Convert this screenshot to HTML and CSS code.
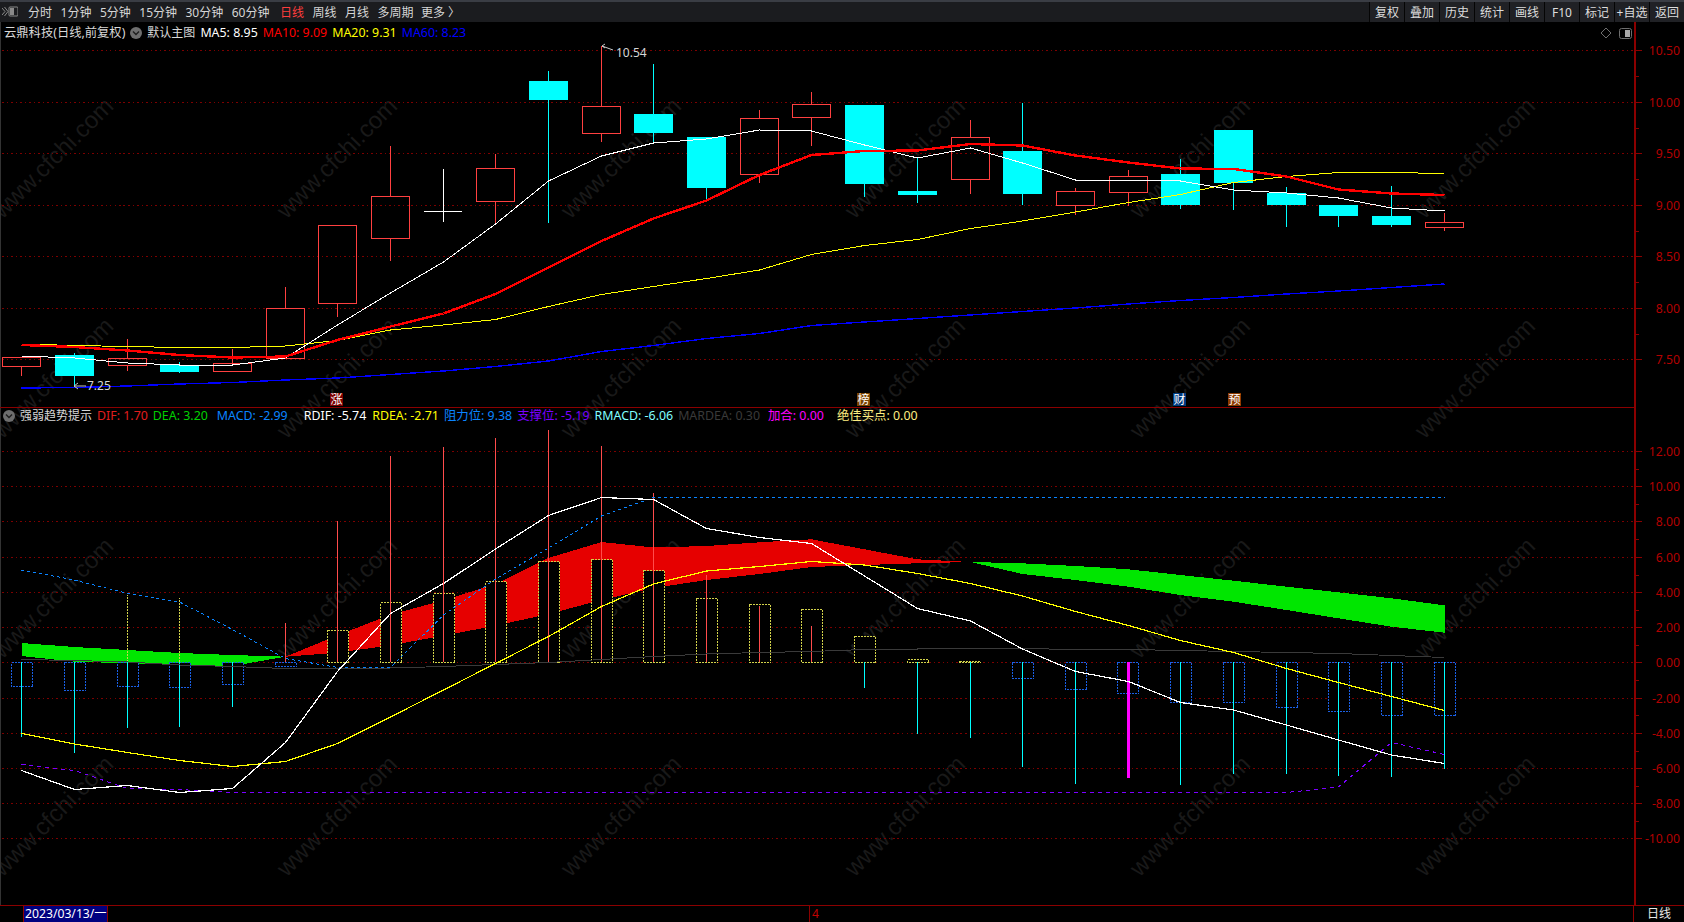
FILE: index.html
```html
<!DOCTYPE html>
<html lang="zh">
<head>
<meta charset="utf-8">
<title>云鼎科技 日线</title>
<link rel="stylesheet" href="styles.css">
</head>
<body>
<div class="app">
  <header class="toolbar">
    <svg class="tool-icon" width="16" height="12" viewBox="0 0 16 12"><path class="ti-line" d="M0 2l3 3.5L0 9M2.5 1l3.5 4.5L2.5 10"/><rect class="ti-box" x="7" y="1" width="9" height="9" rx="1"/><rect class="ti-fill" x="8" y="2" width="4" height="7"/></svg>
    <nav class="periods">
      <span>分时</span><span>1分钟</span><span>5分钟</span><span>15分钟</span><span>30分钟</span><span>60分钟</span><span class="active">日线</span><span>周线</span><span>月线</span><span>多周期</span><span class="more">更多<i>〉</i></span>
    </nav>
    <div class="buttons">
      <button>复权</button><button>叠加</button><button>历史</button><button>统计</button><button>画线</button><button>F10</button><button>标记</button><button>+自选</button><button>返回</button>
    </div>
  </header>

  <main class="charts">
    <svg class="chart" width="1684" height="883" viewBox="0 22 1684 883">
      <g class="wm">
        <text transform="rotate(-45 53 158)" x="53" y="166">www.cfchi.com</text>
        <text transform="rotate(-45 337 158)" x="337" y="166">www.cfchi.com</text>
        <text transform="rotate(-45 621 158)" x="621" y="166">www.cfchi.com</text>
        <text transform="rotate(-45 905 158)" x="905" y="166">www.cfchi.com</text>
        <text transform="rotate(-45 1190 158)" x="1190" y="166">www.cfchi.com</text>
        <text transform="rotate(-45 1475 158)" x="1475" y="166">www.cfchi.com</text>
        <text transform="rotate(-45 53 378)" x="53" y="386">www.cfchi.com</text>
        <text transform="rotate(-45 337 378)" x="337" y="386">www.cfchi.com</text>
        <text transform="rotate(-45 621 378)" x="621" y="386">www.cfchi.com</text>
        <text transform="rotate(-45 905 378)" x="905" y="386">www.cfchi.com</text>
        <text transform="rotate(-45 1190 378)" x="1190" y="386">www.cfchi.com</text>
        <text transform="rotate(-45 1475 378)" x="1475" y="386">www.cfchi.com</text>
        <text transform="rotate(-45 53 598)" x="53" y="606">www.cfchi.com</text>
        <text transform="rotate(-45 337 598)" x="337" y="606">www.cfchi.com</text>
        <text transform="rotate(-45 621 598)" x="621" y="606">www.cfchi.com</text>
        <text transform="rotate(-45 905 598)" x="905" y="606">www.cfchi.com</text>
        <text transform="rotate(-45 1190 598)" x="1190" y="606">www.cfchi.com</text>
        <text transform="rotate(-45 1475 598)" x="1475" y="606">www.cfchi.com</text>
        <text transform="rotate(-45 53 816)" x="53" y="824">www.cfchi.com</text>
        <text transform="rotate(-45 337 816)" x="337" y="824">www.cfchi.com</text>
        <text transform="rotate(-45 621 816)" x="621" y="824">www.cfchi.com</text>
        <text transform="rotate(-45 905 816)" x="905" y="824">www.cfchi.com</text>
        <text transform="rotate(-45 1190 816)" x="1190" y="824">www.cfchi.com</text>
        <text transform="rotate(-45 1475 816)" x="1475" y="824">www.cfchi.com</text>
      </g>

      <path class="grid" d="M2 50.5H1634M2 102.5H1634M2 153.5H1634M2 205.5H1634M2 256.5H1634M2 308.5H1634M2 359.5H1634M2 451.5H1634M2 486.5H1634M2 521.5H1634M2 557.5H1634M2 592.5H1634M2 627.5H1634M2 662.5H1634M2 698.5H1634M2 733.5H1634M2 768.5H1634M2 803.5H1634M2 838.5H1634"/>

      <!-- upper panel: candles -->
      <path class="wick-up" d="M21.5 366V376M127.5 339V358M127.5 365V371M232.5 349V363M285.5 287V308M337.5 303V317M390.5 146V196M390.5 239V261M495.5 154V168M495.5 202V224M601.5 46V106M601.5 134V142M759.5 110V118M759.5 175V183M811.5 92V104M811.5 117V146M970.5 120V137M970.5 180V194M1075.5 188V191M1075.5 206V215M1128.5 170V176M1128.5 193V206M1444.5 213V222M1444.5 228V231"/>
      <g class="body-up">
        <rect x="2.5" y="357.5" width="38" height="9"/>
        <rect x="108.5" y="358.5" width="38" height="7"/>
        <rect x="213.5" y="363.5" width="38" height="8"/>
        <rect x="266.5" y="308.5" width="38" height="50"/>
        <rect x="318.5" y="225.5" width="38" height="78"/>
        <rect x="371.5" y="196.5" width="38" height="42"/>
        <rect x="476.5" y="168.5" width="38" height="33"/>
        <rect x="582.5" y="106.5" width="38" height="27"/>
        <rect x="740.5" y="118.5" width="38" height="56"/>
        <rect x="792.5" y="104.5" width="38" height="13"/>
        <rect x="951.5" y="137.5" width="38" height="42"/>
        <rect x="1056.5" y="191.5" width="38" height="14"/>
        <rect x="1109.5" y="176.5" width="38" height="16"/>
        <rect x="1425.5" y="222.5" width="38" height="5"/>
      </g>
      <path class="wick-down" d="M74.5 353V387.5M179.5 362V373M548.5 71V223M653.5 64V143M706.5 187V199M864.5 184V197M917.5 158V203M1022.5 103V205M1180.5 159V209M1233.5 183V210M1286.5 187V227M1338.5 216V227M1391.5 186V227"/>
      <g class="body-down">
        <rect x="55" y="355" width="39" height="21"/>
        <rect x="160" y="365" width="39" height="7"/>
        <rect x="529" y="81" width="39" height="19"/>
        <rect x="634" y="114" width="39" height="19"/>
        <rect x="687" y="137" width="39" height="51"/>
        <rect x="845" y="105" width="39" height="79"/>
        <rect x="898" y="191" width="39" height="4"/>
        <rect x="1003" y="151" width="39" height="43"/>
        <rect x="1161" y="174" width="39" height="31"/>
        <rect x="1214" y="130" width="39" height="53"/>
        <rect x="1267" y="193" width="39" height="12"/>
        <rect x="1319" y="205" width="39" height="11"/>
        <rect x="1372" y="216" width="39" height="9"/>
      </g>
      <path class="doji" d="M424 211.5H462M443.5 169V222"/>

      <polyline class="l ma60" points="21.5,388 74.5,387.5 127.5,386 179.5,384 232.5,382.5 285.5,380 337.5,378 390.5,374.5 443.5,371 495.5,366.5 548.5,361 601.5,351.5 653.5,345.5 706.5,338.5 759.5,333.5 811.5,325.5 864.5,322 917.5,318.5 970.5,315 1022.5,311.5 1075.5,308 1128.5,304 1180.5,300.5 1233.5,297.5 1286.5,294 1338.5,291 1391.5,287.5 1444.5,284"/>
      <polyline class="l ma20" points="21.5,344 74.5,345.5 127.5,346.5 179.5,347.5 232.5,347.5 285.5,346 337.5,340.5 390.5,330 443.5,325 495.5,319.5 548.5,306.5 601.5,294.5 653.5,286.5 706.5,278.5 759.5,270 811.5,254.5 864.5,245.5 917.5,239.5 970.5,228.5 1022.5,221 1075.5,212 1128.5,202.5 1180.5,194.5 1233.5,182.5 1286.5,176.5 1338.5,172.5 1391.5,172.5 1444.5,173.5"/>
      <polyline class="l ma5" points="21.5,356 74.5,358 127.5,363 179.5,365 232.5,365 285.5,358 337.5,325 390.5,293 443.5,262 495.5,224 548.5,181 601.5,156 653.5,143 706.5,139 759.5,130 811.5,131 864.5,145 917.5,158 970.5,148 1022.5,163 1075.5,180 1128.5,180 1180.5,181 1233.5,190 1286.5,193 1338.5,198 1391.5,208 1444.5,211"/>
      <polyline class="l ma10" points="21.5,345 74.5,347 127.5,350.5 179.5,355 232.5,357.5 285.5,356.5 337.5,340 390.5,326.5 443.5,313.5 495.5,294 548.5,267.5 601.5,241 653.5,218.5 706.5,200.5 759.5,175 811.5,155 864.5,151 917.5,150.5 970.5,144 1022.5,145.5 1075.5,155.5 1128.5,162.5 1180.5,168.5 1233.5,169 1286.5,176.5 1338.5,189.5 1391.5,193.5 1444.5,195"/>

      <path class="note" d="M602 46L613 50M602 46l3-2M602 46l3 2"/>
      <text class="note-t" x="616" y="57">10.54</text>
      <path class="note" d="M74 386H86M74 386l4-3M74 386l4 3"/>
      <text class="note-t" x="87" y="390">7.25</text>

      <g class="flag">
        <rect class="f-red" x="330" y="393" width="13" height="13"/><text x="336.5" y="404">涨</text>
        <rect class="f-brown" x="857" y="393" width="13" height="13"/><text x="863.5" y="404">榜</text>
        <rect class="f-blue" x="1173" y="393" width="13" height="13"/><text x="1179.5" y="404">财</text>
        <rect class="f-orange" x="1228" y="393" width="13" height="13"/><text x="1234.5" y="404">预</text>
      </g>

      <path class="ui-mark" d="M1606 28l5 5-5 5-5-5z"/>
      <rect class="ui-mark" x="1619.5" y="28.5" width="12" height="10" rx="2"/>
      <rect class="ui-fill" x="1625" y="30" width="5" height="7"/>

      <!-- lower panel: ribbons -->
      <polygon class="rb-green" points="21.5,643 74.5,647 127.5,650 179.5,653 232.5,655 285.5,656.7 232.5,666 179.5,665 127.5,663.3 74.5,661.7 21.5,656"/>
      <polygon class="rb-red" points="285.5,656.7 337.5,635.3 390.5,614.7 443.5,600.3 495.5,584 548.5,558 601.5,542 653.5,547.5 706.5,546 759.5,542.3 811.5,539.3 864.5,549.3 917.5,559.3 970.5,562 917.5,563.3 864.5,565 811.5,567 759.5,574 706.5,580 653.5,588 601.5,600 548.5,614 495.5,625.7 443.5,635.7 390.5,645.3 337.5,652.7"/>
      <polygon class="rb-green" points="970.5,562 1022.5,563.3 1075.5,566 1128.5,569.3 1180.5,575 1233.5,580.7 1286.5,586.7 1338.5,592.3 1391.5,598.3 1444.5,605.3 1444.5,632.7 1391.5,626.7 1338.5,618.3 1286.5,610 1233.5,601.7 1180.5,595 1128.5,586.7 1075.5,580 1022.5,574"/>

      <g class="box-blue">
        <rect x="11.5" y="662.5" width="21" height="24"/>
        <rect x="64.5" y="662.5" width="21" height="28"/>
        <rect x="117.5" y="662.5" width="21" height="24"/>
        <rect x="169.5" y="662.5" width="21" height="25"/>
        <rect x="222.5" y="662.5" width="21" height="22"/>
        <rect x="275.5" y="662.5" width="21" height="4"/>
        <rect x="1012.5" y="662.5" width="21" height="16"/>
        <rect x="1065.5" y="662.5" width="21" height="27"/>
        <rect x="1117.5" y="662.5" width="21" height="31"/>
        <rect x="1170.5" y="662.5" width="21" height="40"/>
        <rect x="1223.5" y="662.5" width="21" height="40"/>
        <rect x="1276.5" y="662.5" width="21" height="45"/>
        <rect x="1328.5" y="662.5" width="21" height="49"/>
        <rect x="1381.5" y="662.5" width="21" height="53"/>
        <rect x="1434.5" y="662.5" width="21" height="53"/>
      </g>
      <g class="box-yellow">
        <rect x="327.5" y="630.5" width="21" height="32"/>
        <rect x="380.5" y="602.5" width="21" height="60"/>
        <rect x="433.5" y="593.5" width="21" height="69"/>
        <rect x="485.5" y="581.5" width="21" height="81"/>
        <rect x="538.5" y="561.5" width="21" height="101"/>
        <rect x="591.5" y="559.5" width="21" height="103"/>
        <rect x="643.5" y="570.5" width="21" height="92"/>
        <rect x="696.5" y="598.5" width="21" height="64"/>
        <rect x="749.5" y="604.5" width="21" height="58"/>
        <rect x="801.5" y="609.5" width="21" height="53"/>
        <rect x="854.5" y="636.5" width="21" height="26"/>
        <rect x="907.5" y="659.5" width="21" height="3"/>
        <rect x="959.5" y="661.5" width="21" height="1"/>
      </g>

      <path class="bar-yellow" d="M127.5 662V595M179.5 662V598"/>
      <path class="bar-cyan" d="M21.5 662V737M74.5 662V753M127.5 662V728M179.5 662V727M232.5 662V707M864.5 662V688M917.5 662V734M970.5 662V738M1022.5 662V767M1075.5 662V784M1180.5 662V785M1233.5 662V774M1286.5 662V774M1338.5 662V776M1391.5 662V777M1444.5 662V769"/>
      <path class="bar-red" d="M285.5 623V662M337.5 521V662M390.5 456V662M443.5 447V662M495.5 438V662M548.5 430V662M601.5 446V662M653.5 493V662M706.5 575V662M759.5 606V662M811.5 626V662"/>
      <path class="bar-mag" d="M1128 662V778"/>

      <polyline class="l gray" points="21.5,659.5 74.5,660.5 127.5,662 179.5,665 232.5,666.5 285.5,668.5 337.5,668.5 390.5,668 443.5,666.5 495.5,664.5 548.5,662.5 601.5,659.5 653.5,656.5 706.5,654 759.5,652.5 811.5,651.5 864.5,649.5 917.5,649 970.5,648.5 1022.5,648.5 1075.5,649.5 1128.5,649.5 1180.5,650.5 1233.5,651.5 1286.5,652.5 1338.5,653.5 1391.5,655.5 1444.5,657.5"/>
      <polyline class="l dash-blue" points="21.5,570 74.5,580 127.5,593.5 179.5,602 232.5,629.5 285.5,658.5 337.5,667.5 390.5,667.5 443.5,615 495.5,579 548.5,548 601.5,516 653.5,497.5 1444.5,497.5"/>
      <polyline class="l dash-purple" points="21.5,764.5 74.5,770.5 127.5,788.5 179.5,789.5 232.5,792.5 1286.5,792.5 1338.5,787 1391.5,742.5 1444.5,754.5"/>
      <polyline class="l rdea" points="21.5,733.5 74.5,744 127.5,752.5 179.5,760.5 232.5,766.5 285.5,761.5 337.5,743.5 390.5,717 443.5,690 495.5,663.5 548.5,636.5 601.5,606.5 653.5,584 706.5,571 759.5,566.5 811.5,561.5 864.5,565 917.5,573.5 970.5,583.5 1022.5,596 1075.5,611.5 1128.5,625.5 1180.5,640.5 1233.5,652.5 1286.5,668.5 1338.5,682.5 1391.5,696.5 1444.5,710.5"/>
      <polyline class="l rdif" points="21.5,770.5 74.5,789.5 127.5,785.5 179.5,792.5 232.5,788.5 285.5,742.5 337.5,671.5 390.5,613.5 443.5,583.5 495.5,549 548.5,515.5 601.5,497.5 653.5,499.5 706.5,528.5 759.5,537.5 811.5,543.5 864.5,576 917.5,608.5 970.5,621 1022.5,649 1075.5,671.5 1128.5,681.5 1180.5,702.5 1233.5,710 1286.5,725 1338.5,740 1391.5,755 1444.5,763.5"/>

      <!-- frame and axis -->
      <path class="frame-left" d="M.5 22V905"/>
      <path class="frame" d="M0 407.5H1634"/>
      <path class="axis-line" d="M1635 22V905"/>
      <path class="ticks" d="M1636 50.5h6M1636 102.5h6M1636 153.5h6M1636 205.5h6M1636 256.5h6M1636 308.5h6M1636 359.5h6M1636 76.5h3M1636 128.5h3M1636 179.5h3M1636 231.5h3M1636 282.5h3M1636 334.5h3M1636 451.5h6M1636 486.5h6M1636 521.5h6M1636 557.5h6M1636 592.5h6M1636 627.5h6M1636 662.5h6M1636 698.5h6M1636 733.5h6M1636 768.5h6M1636 803.5h6M1636 838.5h6M1636 469.5h3M1636 504.5h3M1636 539.5h3M1636 575.5h3M1636 610.5h3M1636 645.5h3M1636 680.5h3M1636 715.5h3M1636 751.5h3M1636 786.5h3M1636 821.5h3"/>
      <g class="axis">
        <text x="1680" y="55">10.50</text><text x="1680" y="107">10.00</text><text x="1680" y="158">9.50</text><text x="1680" y="210">9.00</text><text x="1680" y="261">8.50</text><text x="1680" y="313">8.00</text><text x="1680" y="364">7.50</text>
        <text x="1680" y="456">12.00</text><text x="1680" y="491">10.00</text><text x="1680" y="526">8.00</text><text x="1680" y="562">6.00</text><text x="1680" y="597">4.00</text><text x="1680" y="632">2.00</text><text x="1680" y="667">0.00</text><text x="1680" y="703">-2.00</text><text x="1680" y="738">-4.00</text><text x="1680" y="773">-6.00</text><text x="1680" y="808">-8.00</text><text x="1680" y="843">-10.00</text>
      </g>
    </svg>

    <div class="legend legend-main">
      <span class="name stock">云鼎科技(日线,前复权)</span>
      <svg class="chev" width="12" height="12" viewBox="0 0 12 12"><circle class="chev-bg" cx="6" cy="6" r="6"/><path class="chev-mark" d="M3 4.5l3 3 3-3"/></svg>
      <span class="name">默认主图</span>
      <span class="c-white">MA5: 8.95</span>
      <span class="c-red">MA10: 9.09</span>
      <span class="c-yellow">MA20: 9.31</span>
      <span class="c-blue">MA60: 8.23</span>
    </div>
    <div class="legend legend-sub">
      <svg class="chev" width="12" height="12" viewBox="0 0 12 12"><circle class="chev-bg" cx="6" cy="6" r="6"/><path class="chev-mark" d="M3 4.5l3 3 3-3"/></svg>
      <span class="name">强弱趋势提示</span>
      <span class="c-dif">DIF: 1.70</span>
      <span class="c-dea">DEA: 3.20</span>
      <span class="c-macd wide">MACD: -2.99</span>
      <span class="c-white rdif-item">RDIF: -5.74</span>
      <span class="c-yellow rdea-item">RDEA: -2.71</span>
      <span class="c-res">阻力位: 9.38</span>
      <span class="c-sup">支撑位: -5.19</span>
      <span class="c-rm">RMACD: -6.06</span>
      <span class="c-mar">MARDEA: 0.30</span>
      <span class="c-mag">加合: 0.00</span>
      <span class="c-buy">绝佳买点: 0.00</span>
    </div>
  </main>

  <footer class="timebar">
    <div class="time-cell">
      <span class="date">2023/03/13/一</span>
      <span class="month">4</span>
    </div>
    <div class="period-cell">日线</div>
  </footer>
</div>
</body>
</html>
```
FILE: styles.css
```css
* { box-sizing: border-box; }
html, body { margin: 0; padding: 0; background: #000; }
body {
  width: 1684px;
  height: 922px;
  overflow: hidden;
  font: 12px/1 "Noto Sans", "Noto Sans CJK SC", sans-serif;
  color: #e0e0e0;
}
.app { display: flex; flex-direction: column; height: 922px; }

/* toolbar */
.toolbar {
  display: flex;
  align-items: center;
  height: 22px;
  flex: none;
  background: #1b1c1f;
  border-top: 2px solid #3a3d44;
  padding-left: 2px;
  color: #d6d6d6;
}
.tool-icon { flex: none; margin-right: 10px; }
.ti-line { fill: none; stroke: #8a8a8a; stroke-width: 1; }
.ti-box { fill: none; stroke: #8a8a8a; }
.ti-fill { fill: #8a8a8a; }
.periods { display: flex; align-items: center; gap: 8.5px; padding-top: 2px; white-space: nowrap; }
.periods .active { color: #ff3c3c; margin-left: 2px; }
.periods .more { margin-left: -1px; }
.periods i { font-style: normal; margin-left: 3px; }
.buttons { display: flex; margin-left: auto; height: 20px; }
.buttons button {
  width: 35px;
  height: 20px;
  padding: 2px 0 0;
  border: 0;
  border-left: 1px solid #050505;
  background: #202125;
  color: #dcdcdc;
  font: inherit;
  white-space: nowrap;
}

/* chart */
.charts { position: relative; flex: none; height: 883px; }
.chart { display: block; }
.chart text { font-family: "Noto Sans", "Noto Sans CJK SC", sans-serif; font-size: 12px; }
.chart .wm text {
  font-family: "Liberation Sans", sans-serif;
  font-size: 24px;
  fill: #191919;
  text-anchor: middle;
}
.grid { fill: none; stroke: #7d0000; stroke-width: 1; stroke-dasharray: 1.5 3; shape-rendering: crispEdges; }
.wick-up { fill: none; stroke: #ff4040; stroke-width: 1; shape-rendering: crispEdges; }
.body-up rect { fill: none; stroke: #ff4040; stroke-width: 1; shape-rendering: crispEdges; }
.wick-down { fill: none; stroke: #00ffff; stroke-width: 1; shape-rendering: crispEdges; }
.body-down rect { fill: #00ffff; shape-rendering: crispEdges; }
.doji { fill: none; stroke: #fff; stroke-width: 1; shape-rendering: crispEdges; }

.l { fill: none; shape-rendering: crispEdges; stroke-width: 1; }
.ma5 { stroke: #fff; }
.ma10 { stroke: #ff0000; stroke-width: 2.4; }
.ma20 { stroke: #ffff00; }
.ma60 { stroke: #0000ff; stroke-width: 1.4; }
.gray { stroke: #3a3a3a; }
.dash-blue { stroke: #0a84ff; stroke-dasharray: 3 3; }
.dash-purple { stroke: #7a00ff; stroke-dasharray: 4 4; }
.rdea { stroke: #ffff00; stroke-width: 1.2; }
.rdif { stroke: #fff; stroke-width: 1.2; }

.note { fill: none; stroke: #c8c8c8; stroke-width: 1; }
.chart .note-t { fill: #d6d6d6; font-size: 12px; }
.flag text { fill: #fff; text-anchor: middle; }
.f-red { fill: #7c0000; }
.f-brown { fill: #7a4300; }
.f-blue { fill: #003a80; }
.f-orange { fill: #8c3a00; }
.ui-mark { fill: none; stroke: #6e6e6e; stroke-width: 1; }
.ui-fill { fill: #a8a8a8; }

.rb-green { fill: #00e600; shape-rendering: crispEdges; }
.rb-red { fill: #e60000; shape-rendering: crispEdges; }
.box-blue rect { fill: #000; stroke: #1a60e6; stroke-width: 1; stroke-dasharray: 2 1; shape-rendering: crispEdges; }
.box-yellow rect { fill: #000; stroke: #d2d24a; stroke-width: 1; stroke-dasharray: 2 1; shape-rendering: crispEdges; }
.bar-yellow { fill: none; stroke: #d2d24a; stroke-width: 1; stroke-dasharray: 2 1; shape-rendering: crispEdges; }
.bar-cyan { fill: none; stroke: #00ffff; stroke-width: 1; shape-rendering: crispEdges; }
.bar-red { fill: none; stroke: #ff4c4c; stroke-width: 1; shape-rendering: crispEdges; }
.bar-mag { fill: none; stroke: #ff00ff; stroke-width: 3; shape-rendering: crispEdges; }

.frame-left { stroke: #333; stroke-width: 1; shape-rendering: crispEdges; }
.frame { stroke: #8b0000; stroke-width: 1; shape-rendering: crispEdges; }
.axis-line { stroke: #8b0000; stroke-width: 2; shape-rendering: crispEdges; }
.ticks { fill: none; stroke: #8b0000; stroke-width: 1; shape-rendering: crispEdges; }
.chart .axis text { fill: #b40000; text-anchor: end; font-size: 12.2px; }

/* legends over the chart */
.legend {
  position: absolute;
  display: flex;
  align-items: center;
  gap: 5px;
  height: 20px;
  font-size: 12.4px;
  white-space: nowrap;
}
.legend-main { left: 4px; top: 1px; }
.legend-sub { left: 3px; top: 384px; }
.chev { flex: none; }
.chev-bg { fill: #6e6e6e; }
.chev-mark { fill: none; stroke: #1e1e1e; stroke-width: 1.4; }
.legend .name { color: #d8d8d8; font-size: 12px; }
.legend .stock { font-size: 12.3px; }
.legend .wide { margin-left: 4px; }
.legend .rdif-item { margin-left: 11px; }
.legend .rdea-item { margin-left: 1px; }
.legend .c-mag { margin-left: 3px; }
.legend .c-buy { margin-left: 8px; }
.c-white { color: #fff; }
.c-red { color: #ff0000; }
.c-yellow { color: #ffff00; }
.c-blue { color: #0000ff; }
.c-dif { color: #e01e1e; }
.c-dea { color: #00d000; }
.c-macd { color: #0a84ff; }
.c-res { color: #0a84ff; }
.c-sup { color: #7a00ff; }
.c-rm { color: #80ffff; }
.c-mar { color: #3a3a3a; }
.c-mag { color: #ff00ff; }
.c-buy { color: #ffee80; }

/* time axis */
.timebar {
  display: flex;
  flex: none;
  height: 17px;
  border-top: 1px solid #8b0000;
}
.time-cell { display: flex; align-items: center; width: 1634px; border-right: 1px solid #8b0000; }
.date {
  width: 85px;
  height: 16px;
  margin-left: 23px;
  border-left: 1px solid #8b0000;
  border-right: 1px solid #8b0000;
  background: #000080;
  color: #fff;
  font-size: 12.2px;
  line-height: 15px;
  padding-left: 1px;
  white-space: nowrap;
}
.month {
  margin-left: 701px;
  height: 16px;
  padding-left: 2px;
  border-left: 1px solid #8b0000;
  color: #c00000;
  line-height: 15px;
}
.period-cell { flex: 1; text-align: center; line-height: 15px; color: #e8e8e8; }
```
